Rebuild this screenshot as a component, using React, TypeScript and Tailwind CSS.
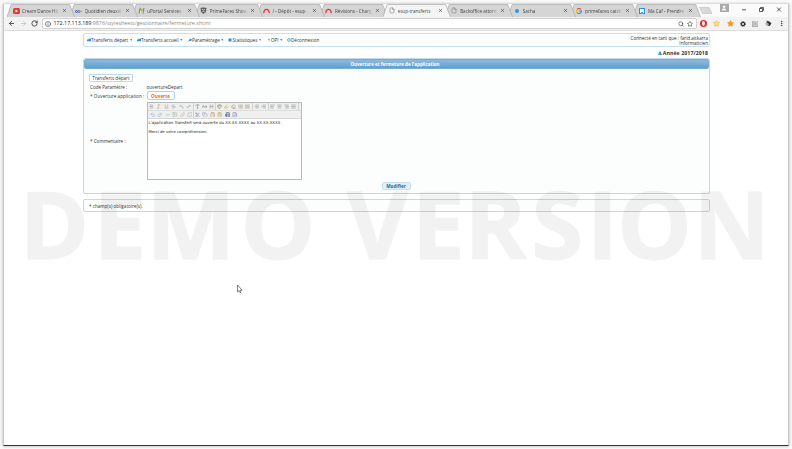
import React from "react";
import {
  ArrowLeft, ArrowRight, RotateCw, Info, Search, Star, File, X, Bold, Italic, Underline, Strikethrough,
  Subscript, Superscript, Type, CaseSensitive, Heading, Palette, Highlighter, Eraser, List, ListOrdered, Outdent, Indent,
  AlignLeft, AlignCenter, AlignRight, AlignJustify, Undo2, Redo2, Minus, Image, Link, Unlink, Scissors, Copy,
  ClipboardPaste, ClipboardList, Printer, FileCode, MoreVertical, User,
} from "lucide-react";

function Fav({ kind }: { kind: string }) {
  if (kind === "youtube")
    return (
      <svg className="h-[6px] w-[7px]" viewBox="0 0 14 12"><rect width="14" height="12" rx="3" fill="#e53935" /><path d="M5 3l5 3-5 3z" fill="#fff" /></svg>
    );
  if (kind === "abc")
    return (
      <svg className="h-[6px] w-[7px]" viewBox="0 0 14 12"><circle cx="3" cy="7" r="2" fill="none" stroke="#3949ab" strokeWidth="2" /><circle cx="8" cy="7" r="2" fill="none" stroke="#5c6bc0" strokeWidth="2" /><circle cx="12" cy="7" r="1.6" fill="#e57373" /></svg>
    );
  if (kind === "uportal")
    return (
      <svg className="h-[7px] w-[7px]" viewBox="0 0 14 14"><path d="M2 13L4 3l4 5" fill="none" stroke="#55a85a" strokeWidth="2.2" /><path d="M7 8l4-6" stroke="#f4a43a" strokeWidth="2.4" /><path d="M12 2l-2 11" stroke="#55a85a" strokeWidth="2.2" /></svg>
    );
  if (kind === "prime")
    return (
      <svg className="h-[7px] w-[7px]" viewBox="0 0 14 14"><path d="M1 2l4-1h4l4 1-1 8-5 4-5-4z" fill="#666" /><path d="M4 4l2 2h2l2-2M5 9h4" stroke="#ddd" strokeWidth="1.4" fill="none" /></svg>
    );
  if (kind === "arch")
    return (
      <svg className="h-[6px] w-[7px]" viewBox="0 0 14 12"><path d="M1.5 10.5C2 0 12 0 12.5 10.5" fill="none" stroke="#d9363a" strokeWidth="2.6" /></svg>
    );
  if (kind === "dot") return <span className="h-[4px] w-[4px] rounded-full bg-[#2f96e0]" />;
  if (kind === "google")
    return (
      <svg className="h-[6px] w-[6px]" viewBox="0 0 12 12" fill="none" strokeWidth="2.2"><path d="M10 3A5 5 0 0 0 2 3" stroke="#ea4335" /><path d="M2 3a5 5 0 0 0 0 6" stroke="#fbbc05" /><path d="M2 9a5 5 0 0 0 7 1" stroke="#34a853" /><path d="M9 10a5 5 0 0 0 2-4H6" stroke="#4285f4" /></svg>
    );
  if (kind === "caf")
    return (
      <svg className="h-[6px] w-[6px]" viewBox="0 0 12 12"><path d="M1 1h10v10H8l-2-2-2 2H1z" fill="#fff" stroke="#2196d8" strokeWidth="2.2" /></svg>
    );
  return <File className="h-[7px] w-[6px] text-[#777]" strokeWidth={2.2} />;
}

const tabs = [
  { icon: "youtube", label: "Cream Dance Hit" },
  { icon: "abc", label: "Quotidien deuxiè" },
  { icon: "uportal", label: "uPortal Services" },
  { icon: "prime", label: "PrimeFaces Show" },
  { icon: "arch", label: "/ - Dépôt - esup-" },
  { icon: "arch", label: "Révisions - Charg" },
  { icon: "file", label: "esup-transferts" },
  { icon: "file", label: "Backoffice attorn" },
  { icon: "dot", label: "Sacha" },
  { icon: "google", label: "primefaces catch" },
  { icon: "caf", label: "Ma Caf - Prendre" },
];
const ACTIVE = 6;

function Tab({ icon, label, index }: { icon: string; label: string; index: number }) {
  const active = index === ACTIVE;
  return (
    <div className="relative flex h-full w-[62.6px] shrink-0 items-center pl-[5.5px]" style={{ zIndex: active ? 30 : 20 - index }}>
      <svg className="absolute left-0 top-0 h-[13px] w-[68px]" viewBox="0 0 68 13">
        <path d="M0 13L4.2 .5H62.6L67.6 13" fill={active ? "#f4f4f4" : "#d5d5d5"} stroke="#a9a9a9" strokeWidth=".7" />
      </svg>
      <span className="relative flex w-[7px] justify-center"><Fav kind={icon} /></span>
      <span className={`relative ml-[2.5px] w-[38px] overflow-hidden whitespace-nowrap text-[4.6px] leading-[8px] text-[#444] ${active ? "" : "[mask-image:linear-gradient(to_right,#000_80%,transparent)]"}`}>{label}</span>
      <X className="relative ml-[2px] h-[5px] w-[5px] text-[#444]" strokeWidth={3} />
    </div>
  );
}

function TabStrip() {
  return (
    <div className="flex h-[13px] items-stretch bg-[#fbfbfb] pl-[3px]">
      {tabs.map((t, i) => <Tab key={i} index={i} {...t} />)}
      <svg className="mt-[3px] ml-[3px] h-[7px] w-[14px]" viewBox="0 0 14 7"><path d="M.5 .5h9.5l3 6H3.5z" fill="#d9d9d9" stroke="#bbb" strokeWidth=".6" /></svg>
      <div className="ml-[7px] flex h-[8px] w-[9px] items-center justify-center bg-[#aaa]"><User className="h-[6px] w-[6px] fill-white text-white" /></div>
      <svg className="ml-auto mr-[6px] mt-[1.5px] h-[7px] w-[44px]" viewBox="0 0 44 7" fill="none" stroke="#333" strokeWidth=".8">
        <path d="M4 3.8h4M39 1.5l4 4M43 1.5l-4 4" />
        <path d="M21.5 2.5h3v3h-3zM22.5 2.5v-1h3v3h-1" />
      </svg>
    </div>
  );
}

function Toolbar() {
  return (
    <div className="flex h-[13px] items-center bg-[#f2f2f2] text-[#444]">
      <ArrowLeft className="ml-[4px] h-[7px] w-[7px]" strokeWidth={3} />
      <ArrowRight className="ml-[5px] h-[7px] w-[7px] text-[#bbb]" strokeWidth={2.5} />
      <RotateCw className="ml-[4px] h-[7px] w-[7px]" strokeWidth={3} />
      <div className="ml-[4px] flex h-[11px] w-[655px] items-center rounded-[2px] border border-[#d0d0d0] bg-white pl-[2px] pr-[3px]">
        <Info className="h-[6px] w-[6px]" strokeWidth={2.5} />
        <span className="ml-[2.5px] whitespace-nowrap text-[5.35px] leading-[9px] text-[#8b8b8b]"><span className="text-[#222]">172.17.113.189</span>:9876/stylesheets/gestionnaire/fermeture.xhtml</span>
        <Search className="ml-auto h-[6px] w-[6px]" strokeWidth={2.5} />
        <Star className="ml-[3px] h-[6px] w-[6px]" strokeWidth={2.5} />
      </div>
      <div className="ml-[3px] flex flex-1 items-center justify-between pr-[3px]">
        <svg className="h-[7px] w-[7px]" viewBox="0 0 14 14"><circle cx="7" cy="7" r="7" fill="#e5252a" /><ellipse cx="7" cy="7" rx="2.8" ry="4.8" fill="#fff" /></svg>
        <Star className="h-[7px] w-[7px] fill-[#ffe67a] text-[#e7ad24]" />
        <Star className="h-[7px] w-[7px] fill-[#f59b18] text-[#f59b18]" />
        <svg className="h-[6px] w-[6px]" viewBox="0 0 12 12"><circle cx="6" cy="6" r="3.2" fill="none" stroke="#333" strokeWidth="2.4" /><circle cx="6" cy="6" r="4.9" fill="none" stroke="#333" strokeWidth="1.8" strokeDasharray="2.2 1.65" /></svg>
        <span className="flex h-[6px] w-[6px] items-center justify-center bg-[#b2b2b2]"><File className="h-[5px] w-[5px] text-white" /></span>
        <svg className="h-[7px] w-[7px]" viewBox="0 0 14 14"><circle cx="6" cy="7" r="5" fill="#aaa" /><path d="M3 1l7 3 3 3-4 5-3-1 2-3-3-2z" fill="#333" /></svg>
        <MoreVertical className="h-[7px] w-[7px]" strokeWidth={3} />
      </div>
    </div>
  );
}

function MenuIcon({ kind }: { kind: string }) {
  const d: Record<string, string> = {
    home: "M0 3h3V1.5h5v5H0z",
    pin: "M0 8l3-5 1-2 4 2-2 3-3 0z",
    chart: "M1 1h6v6H1z",
    flash: "M5 0L2 4h2L3 8l3-5H4z",
  };
  return (
    <svg className="h-[4px] w-[4px] shrink-0" viewBox="0 0 8 8">
      {kind === "power" ? <circle cx="4" cy="4" r="2.8" fill="none" stroke="#2e9fe6" strokeWidth="1.6" /> : <path d={d[kind]} fill="#2e8fe0" />}
    </svg>
  );
}

function MenuItem({ kind, label, width, arrow = true }: { kind: string; label: string; width: string; arrow?: boolean }) {
  return (
    <div className={`flex items-center whitespace-nowrap ${width}`}>
      <MenuIcon kind={kind} />
      <span className="ml-[0.5px]">{label}</span>
      {arrow && <svg className="ml-[1.5px] h-[2px] w-[2.5px]" viewBox="0 0 4 3"><path d="M0 0h4L2 3z" fill="#4a9bd4" /></svg>}
    </div>
  );
}

const row1 = [
  [Bold, Italic, Underline, Strikethrough, Subscript, Superscript],
  [Type, CaseSensitive, Heading],
  [Palette, Highlighter, Eraser, List, ListOrdered],
  [Outdent, Indent],
  [AlignLeft, AlignCenter, AlignRight, AlignJustify],
];
const tints1 = ["text-[#aaa]", "text-[#999]", "text-[#a69a80]", "text-[#9a9a9a]", "text-[#999]"];
const row2 = [
  { I: Undo2, c: "text-[#a5b6cf]" }, { I: Redo2, c: "text-[#a5b6cf]" }, { I: Minus, c: "text-[#a9b9a9]" },
  { I: Image, c: "text-[#b4c4b6]" }, { I: Link, c: "text-[#b5bdaa]" }, { I: Unlink, c: "text-[#aab4bd]" },
  { I: Scissors, c: "text-[#8fa8c9]" }, { I: Copy, c: "text-[#a5b3c6]" }, { I: ClipboardPaste, c: "text-[#c8ab6a]" },
  { I: ClipboardList, c: "text-[#c9b47d]" }, { I: Printer, c: "text-[#3f6594]" }, { I: FileCode, c: "text-[#8b8fb0]" },
];
const groupWidths = ["w-[46px]", "w-[22px]", "w-[37px]", "w-[16px]", "w-[30px]"];

function Editor() {
  return (
    <div className="h-[78px] w-[155px] border border-[#b9b9b9] bg-white">
      <div className="flex h-[8px] items-center border-b border-[#ddd] bg-[#efefef]">
        {row1.map((g, i) => (
          <div key={i} className={`flex h-full items-center justify-around border-r border-[#d2d2d2] ${groupWidths[i]}`}>
            {g.map((I, k) => <I key={k} className={`h-[5px] w-[5px] ${i === 2 && k === 1 ? "text-[#d9b33a]" : tints1[i]}`} strokeWidth={3} />)}
          </div>
        ))}
      </div>
      <div className="flex h-[8px] items-center border-b border-[#d8d8d8] bg-[#efefef] pl-[1px]">
        {row2.map(({ I, c }, i) => (
          <span key={i} className={`flex h-full w-[7.5px] items-center justify-center ${i === 5 ? "border-r border-[#d2d2d2]" : ""}`}><I className={`h-[5.5px] w-[5.5px] ${c}`} strokeWidth={2.8} /></span>
        ))}
      </div>
      <div className="pl-[1px] pt-[1.5px] text-[3.92px] leading-[4.6px] text-[#222] font-['DejaVu_Sans',sans-serif]">
        <p className="whitespace-nowrap">L'application Transfert sera ouverte du XX.XX.XXXX au XX.XX.XXXX</p>
        <p className="mt-[4.6px] whitespace-nowrap text-[3.8px]">Merci de votre compréhension.</p>
      </div>
    </div>
  );
}

function Page() {
  return (
    <main className="ml-[79px] w-[627px] text-[4.6px] leading-[6px] text-[#333] font-['Open_Sans',sans-serif]">
      <div className="mt-[2px] flex h-[14px] rounded-[2px] border border-[#c9deef] bg-[#fcfefe] pl-[2.5px] pr-px">
        <nav className="flex h-[12px] items-center">
          <MenuItem kind="home" label="Transferts départ" width="w-[50px]" />
          <MenuItem kind="home" label="Transferts accueil" width="w-[51px]" />
          <MenuItem kind="pin" label="Paramétrage" width="w-[40.5px]" />
          <MenuItem kind="chart" label="Statistiques" width="w-[38.5px]" />
          <MenuItem kind="flash" label="OPI" width="w-[20px]" />
          <MenuItem kind="power" label="Déconnexion" width="w-[40px]" arrow={false} />
        </nav>
        <div className="ml-auto pt-[2px] text-right text-[4.6px] leading-[5px]">
          <p>Connecté en tant que : farid.aitkarra</p>
          <p>Informaticien</p>
        </div>
      </div>
      <div className="flex h-[10px] items-center justify-end pr-[2px] pt-px">
        <svg className="mr-px h-[4px] w-[4px]" viewBox="0 0 8 8"><path d="M4 0l2 3 2 5H0l2-5z" fill="#3d9ad6" /></svg>
        <span className="text-[5.2px] font-bold tracking-[0.1px]">Année 2017/2018</span>
      </div>
      <section className="mt-px flex h-[136px] flex-col rounded-[2px] border border-[#c3d9e8] bg-[#fcfefe]">
        <h1 className="flex h-[10px] shrink-0 items-center justify-center rounded-[2px] border border-[#74abd2] bg-linear-to-b from-[#8cbadd] to-[#629fce] pr-[3px] text-[4.5px] font-bold text-white">Ouverture et fermeture de l'application</h1>
        <div className="ml-[5px] mt-[5px] flex h-[8px] w-[44px] shrink-0 items-center justify-center rounded-[1px] border border-[#bcd9ee] bg-white text-[4.6px]">Transferts départ</div>
        <div className="ml-[6px] flex h-[9px] shrink-0 items-center"><span className="w-[56.5px]">Code Paramètre :</span><span>ouvertureDepart</span></div>
        <div className="ml-[6px] flex h-[9px] shrink-0 items-center"><span className="w-[56.5px] whitespace-nowrap tracking-[0.05px]">* Ouverture application :</span><span className="flex h-[9px] w-[28px] items-center justify-center rounded-[2px] border border-[#a9d3ef] bg-white font-bold text-[#e17009]">Ouverte</span></div>
        <div className="ml-[6px] mt-[2px] flex shrink-0 items-center"><span className="w-[56.5px]">* Commentaire :</span><Editor /></div>
        <button className="ml-[297.5px] mt-[1.5px] flex h-[8px] w-[29px] shrink-0 items-center justify-center rounded-[2px] border border-[#c5dff0] bg-[#e1effa] font-bold text-[#25689b]">Modifier</button>
      </section>
      <footer className="mt-[5px] flex h-[13px] items-center rounded-[2px] border border-[#c3d9e8] bg-[#fcfefe] pl-[5px]">* champ(s) obligatoire(s).</footer>
    </main>
  );
}

export default function App() {
  return (
    <div className="relative h-[449px] w-[792px] overflow-hidden bg-[#fafafa] pl-[3px] pt-[4px] font-['Open_Sans','Noto_Sans',sans-serif]">
      <div className="h-[442px] w-[786px] border-b border-l border-r border-b-[#383838] border-l-[#c9c9c9] border-r-[#c9c9c9] bg-white shadow-[0_0_3px_#aaa]">
        <TabStrip />
        <Toolbar />
        <div className="h-[1px] bg-[#dcdcdc]" />
        <Page />
      </div>
      <svg className="pointer-events-none absolute left-0 top-0 h-[449px] w-[792px]" viewBox="0 0 792 449">
        <text x="19.5 93.5 146.5 240.5 347 412 464.5 531.5 587 617 693.5" y="259" fontFamily="'Open Sans', 'Noto Sans', sans-serif" fontWeight="700" fontSize="94" fill="#000" stroke="#000" strokeWidth="1.4" opacity=".048">DEMOVERSION</text>
        <path d="M237.5 285v7l1.6-1.5 1 2.2 1-.5-1-2.1h2z" fill="#fff" stroke="#333" strokeWidth=".6" />
      </svg>
    </div>
  );
}
